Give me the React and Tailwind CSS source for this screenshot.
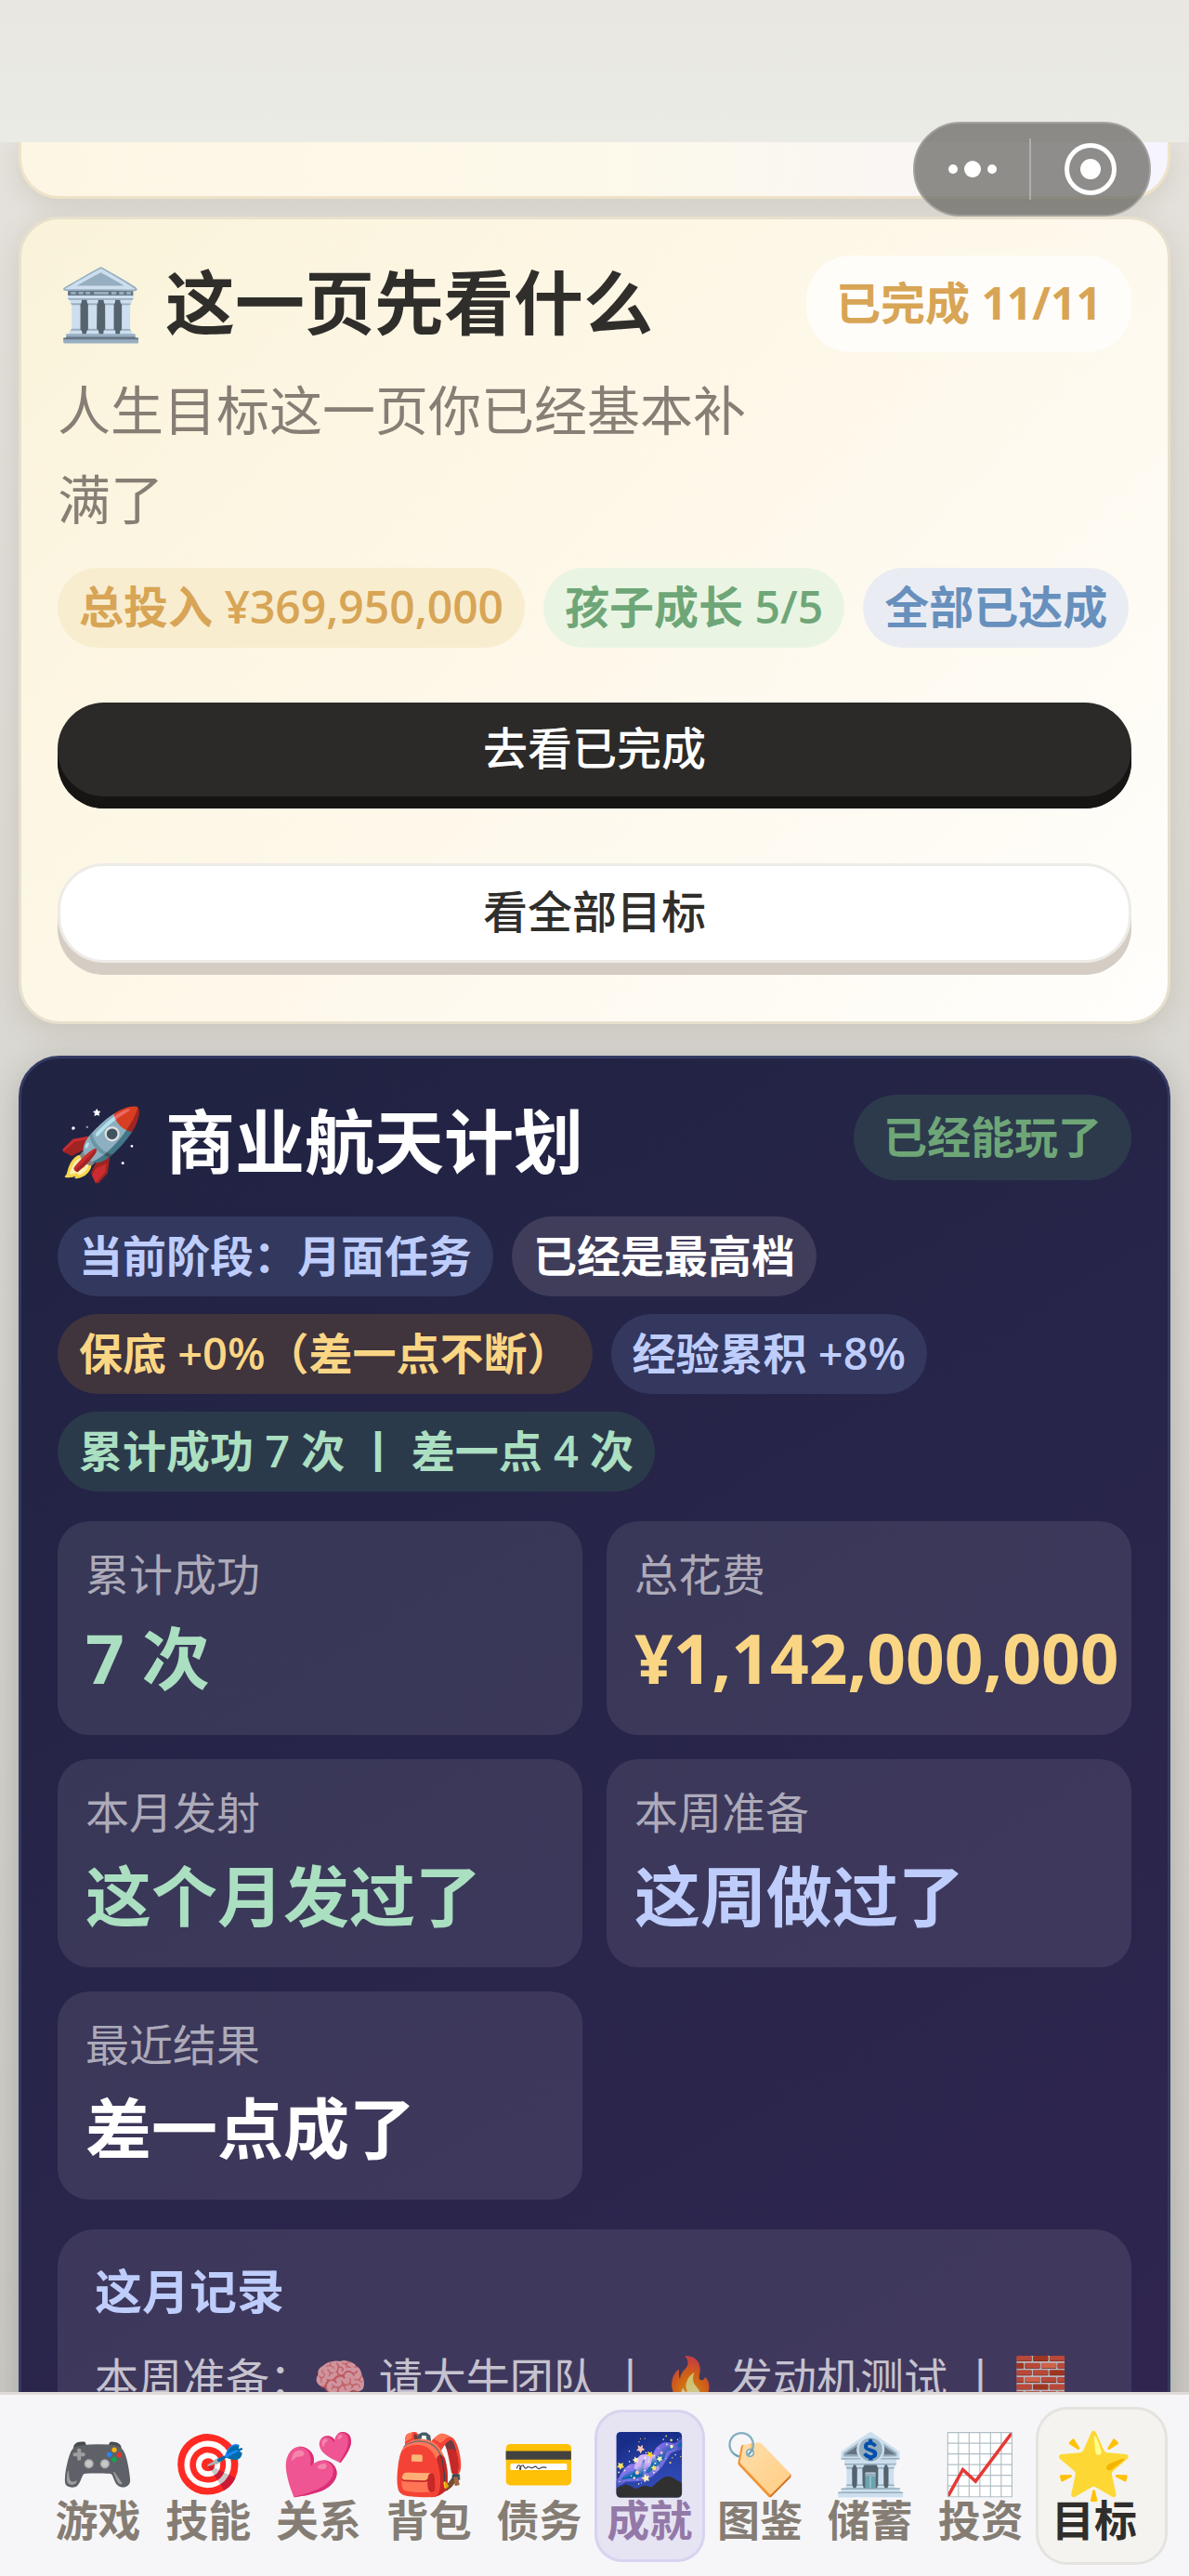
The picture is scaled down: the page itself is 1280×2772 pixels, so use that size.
const goalChips = [
    { label: '总投入 ¥369,950,000', style: 'text-[48px] bg-[#f9edd0] text-[#d7a555]' },
    { label: '孩子成长 5/5', style: 'text-[48px] bg-[#e9f5e2] text-[#6fa678]' },
    { label: '全部已达成', style: 'text-[48px] bg-[#eaecf3] text-[#6790bd]' },
];

const spaceChips = [
    { label: '当前阶段：月面任务', style: 'text-[47px] bg-[#33385f] text-[#becdfb]' },
    { label: '已经是最高档', style: 'text-[47px] bg-[#403d5b] text-white' },
    { label: '保底 +0%（差一点不断）', style: 'text-[47px] bg-[#40343d] text-[#fad684]' },
    { label: '经验累积 +8%', style: 'text-[47px] bg-[#34375e] text-[#becdfb]' },
    { label: '累计成功 7 次 丨 差一点 4 次', style: 'text-[47px] bg-[#2b3a4b] text-[#abdfc1]' },
];

const stats = [
    { label: '累计成功', value: '7 次', style: 'text-[#abdfc1] text-[73px]', pad: 'pb-8' },
    { label: '总花费', value: '¥1,142,000,000', style: 'text-[#fad684] text-[73px]', pad: 'pb-8' },
    { label: '本月发射', value: '这个月发过了', style: 'text-[#abdfc1] text-[71px]', pad: 'pb-[26px]' },
    { label: '本周准备', value: '这周做过了', style: 'text-[#becdfb] text-[71px]', pad: 'pb-[26px]' },
    { label: '最近结果', value: '差一点成了', style: 'text-white text-[71px]', pad: 'pb-[26px]' },
];

const tabs = [
    { icon: '🎮', label: '游戏' },
    { icon: '🎯', label: '技能' },
    { icon: '💕', label: '关系' },
    { icon: '🎒', label: '背包' },
    { icon: '💳', label: '债务' },
    { icon: '🌌', label: '成就', style: 'bg-[#e6e3f3] border-[#d8d3ef] text-[#9379a8]' },
    { icon: '🏷️', label: '图鉴' },
    { icon: '🏦', label: '储蓄' },
    { icon: '📈', label: '投资' },
];

const Chip = ({ label, style }) => (
    <span className={`rounded-[43px] px-[23px] pb-[2px] leading-[84px] font-semibold whitespace-nowrap ${style}`}>
        {label}
    </span>
);

const Capsule = () => (
    <div className="absolute top-[131px] right-[41px] flex h-[102px] w-[256px] items-center rounded-full border-2 border-[#a3a29e] bg-[#6b6a66]/75">
        <button aria-label="更多" className="flex w-[123px] items-center justify-center gap-[7px]">
            <span className="h-[10px] w-[10px] rounded-full bg-white"></span>
            <span className="h-[18px] w-[18px] rounded-full bg-white"></span>
            <span className="h-[10px] w-[10px] rounded-full bg-white"></span>
        </button>
        <span className="h-[66px] w-[2px] bg-white/30"></span>
        <button aria-label="关闭" className="flex flex-1 items-center justify-center">
            <span className="flex h-14 w-14 items-center justify-center rounded-full border-[5px] border-white">
                <span className="h-[22px] w-[22px] rounded-full bg-white"></span>
            </span>
        </button>
    </div>
);

const App = () => {
    return (
        <div className="relative flex h-screen flex-col overflow-hidden bg-linear-to-b from-[#e6e3dd] to-[#c9c8c2] font-['Open_Sans','Noto_Sans_CJK_SC','Noto_Color_Emoji',sans-serif]">
            <header className="h-[153px] shrink-0 bg-linear-to-b from-[#e8e7e2] to-[#ebebe6]"></header>

            <main className="flex min-h-0 flex-1 flex-col overflow-hidden px-5">
                {/* Tail of the scrolled-away card */}
                <div className="mb-[19px] h-[61px] shrink-0 rounded-b-[44px] border-[3px] border-t-0 border-[#eee3c8] bg-linear-to-r from-[#fef6e5] via-[#fdf9ea] to-[#f6f4fd] shadow-[0_8px_24px_rgba(90,80,50,0.12)]"></div>

                <section className="mb-[34px] shrink-0 rounded-[44px] border-[3px] border-[#e7e0cd] bg-linear-[135deg] from-[#faf3da] via-[#fef8ea] to-[#fffefc] px-[39px] pt-[39px] pb-[50px] shadow-[0_8px_32px_rgba(90,80,50,0.14)]">
                    <div className="flex items-start justify-between">
                        <h2 className="flex items-center gap-6 text-[75px] leading-[100px] font-bold text-[#302e2b]">
                            <span className="w-[92px]">🏛️</span>
                            这一页先看什么
                        </h2>
                        <span className="rounded-[48px] bg-white/70 px-8 pb-[2px] text-[48px] leading-[102px] font-bold text-[#d7a555]">已完成 11/11</span>
                    </div>
                    <p className="mt-[14px] max-w-[760px] text-[57px] leading-[96px] text-[#877e75]">人生目标这一页你已经基本补满了</p>
                    <div className="mt-[26px] flex flex-wrap gap-5">
                        {goalChips.map((chip) => <Chip key={chip.label} {...chip} />)}
                    </div>
                    <button className="mt-[59px] block h-[114px] w-full rounded-[50px] bg-[#2b2a28] pb-4 text-[48px] font-medium text-white shadow-[inset_0_-13px_0_#161513]">去看已完成</button>
                    <button className="mt-[59px] mb-[13px] block h-[107px] w-full rounded-[50px] border-[3px] border-[#ecebe7] bg-white pb-1 text-[48px] font-medium text-[#302e2b] shadow-[0_13px_0_#d5cdc4]">看全部目标</button>
                </section>

                <section className="shrink-0 rounded-[44px] border-[3px] border-[#333a62] bg-linear-[150deg] from-[#202342] via-[#28254a] to-[#30254f] px-[39px] pt-[39px] shadow-[0_8px_32px_rgba(60,60,60,0.25)]">
                    <div className="flex items-start justify-between">
                        <h2 className="flex items-center gap-6 text-[75px] leading-[100px] font-bold text-white">
                            <span className="w-[92px]">🚀</span>
                            商业航天计划
                        </h2>
                        <span className="rounded-[46px] bg-[#2c3a4c] px-8 pb-[2px] text-[47px] leading-[90px] font-semibold text-[#6fa678]">已经能玩了</span>
                    </div>
                    <div className="mt-[31px] flex flex-wrap gap-x-5 gap-y-[19px]">
                        {spaceChips.map((chip) => <Chip key={chip.label} {...chip} />)}
                    </div>
                    <div className="mt-8 grid grid-cols-2 gap-[26px]">
                        {stats.map((stat) => (
                            <div key={stat.label} className={`rounded-[34px] bg-white/9 px-[30px] pt-[22px] ${stat.pad}`}>
                                <div className="text-[47px] leading-[70px] text-[#adaab9]">{stat.label}</div>
                                <div className={`mt-1 leading-[102px] font-bold whitespace-nowrap ${stat.style}`}>{stat.value}</div>
                            </div>
                        ))}
                    </div>
                    <div className="mt-8 rounded-[40px] bg-white/9 px-10 pt-[30px] pb-10">
                        <h3 className="text-[51px] leading-[72px] font-bold text-[#becdfb]">这月记录</h3>
                        <p className="mt-[18px] text-[47px] leading-[80px] text-[#c6c2cf]">
                            本周准备：<span className="opacity-75">🧠</span> 请大牛团队 丨 <span className="opacity-75">🔥</span> 发动机测试 丨 <span className="opacity-75">🧱</span>
                        </p>
                    </div>
                </section>
            </main>

            <nav className="flex h-[198px] shrink-0 items-center border-t-[3px] border-[#dfdbd7] bg-[#f6f6f8] pr-[23px] pl-[46px]">
                {tabs.map((tab) => (
                    <button key={tab.label} className={`flex h-[164px] flex-1 flex-col items-center justify-center rounded-[30px] border-[3px] pb-1 font-semibold ${tab.style || 'border-transparent text-[#857d74]'}`}>
                        <span className="text-[64px] leading-[76px]">{tab.icon}</span>
                        <span className="text-[46px] leading-[46px]">{tab.label}</span>
                    </button>
                ))}
                <button className="flex h-[170px] w-[142px] flex-col items-center justify-center rounded-[34px] border-[3px] border-[#e5e3df] bg-[#f5f3ef] pr-4 pb-1 font-semibold text-[#302e2b]">
                    <span className="text-[68px] leading-[76px]">🌟</span>
                    <span className="text-[46px] leading-[46px]">目标</span>
                </button>
            </nav>

            <Capsule />
        </div>
    );
};

export default App;
